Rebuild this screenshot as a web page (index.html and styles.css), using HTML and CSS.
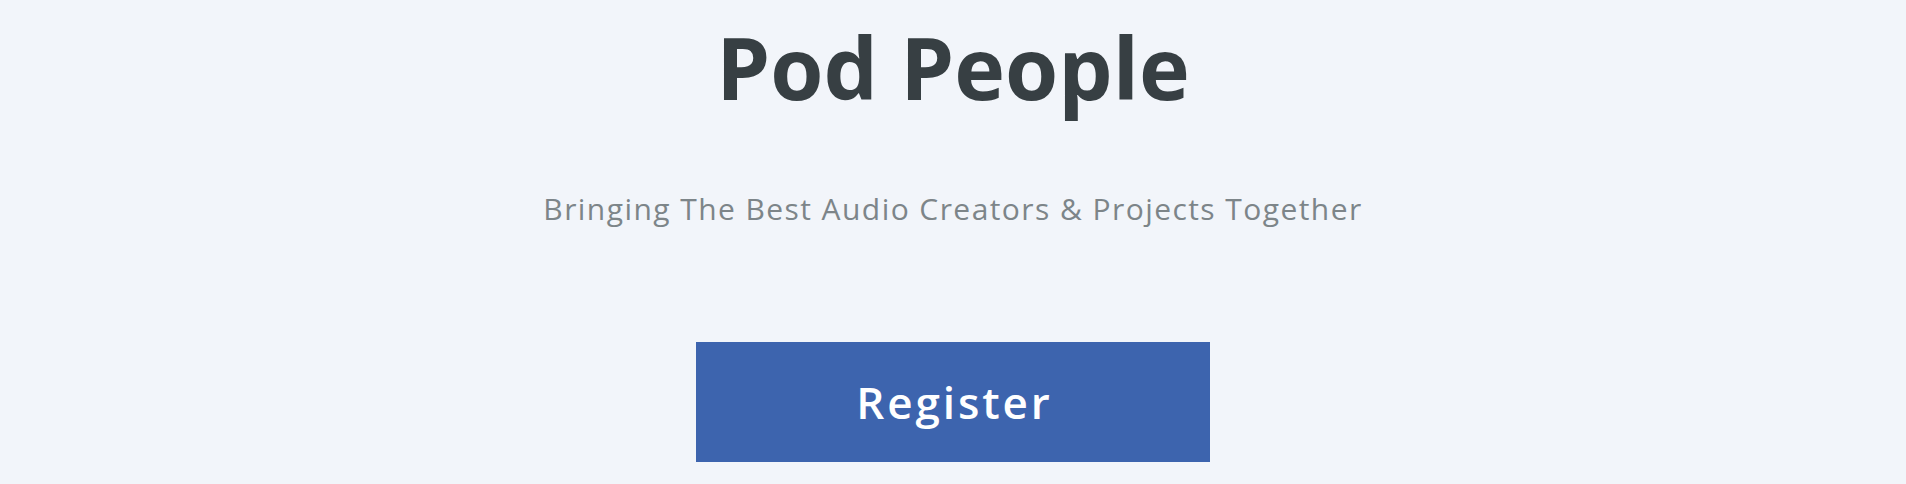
FILE: index.html
```html
<!DOCTYPE html>
<html lang="en">
<head>
<meta charset="utf-8">
<title>Pod People</title>
<link rel="stylesheet" href="styles.css">
</head>
<body>
<main class="hero">
  <h1 class="hero-title">Pod People</h1>
  <p class="hero-subtitle">Bringing The Best Audio Creators &amp; Projects Together</p>
  <a class="hero-button" href="#">Register</a>
</main>
</body>
</html>
```
FILE: styles.css
```css
html, body {
  margin: 0;
  padding: 0;
  background: #f2f5fa;
}
body {
  font-family: "Open Sans", "Noto Sans", sans-serif;
  height: 484px;
  overflow: hidden;
}
.hero {
  display: flex;
  flex-direction: column;
  align-items: center;
  text-align: center;
}
.hero-title {
  margin: 17px 0 0;
  font-size: 86px;
  line-height: 100px;
  font-weight: 700;
  color: #373f43;
}
.hero-subtitle {
  margin: 72px 0 0;
  font-size: 30px;
  line-height: 40px;
  font-weight: 400;
  letter-spacing: 1.43px;
  color: #7d8589;
}
.hero-button {
  margin-top: 113px;
  box-sizing: border-box;
  padding-left: 2.9px;
  display: flex;
  align-items: center;
  justify-content: center;
  width: 514px;
  height: 120px;
  background: #3d64ae;
  color: #ffffff;
  text-decoration: none;
  font-size: 44px;
  font-weight: 600;
  letter-spacing: 2.9px;
}
```
